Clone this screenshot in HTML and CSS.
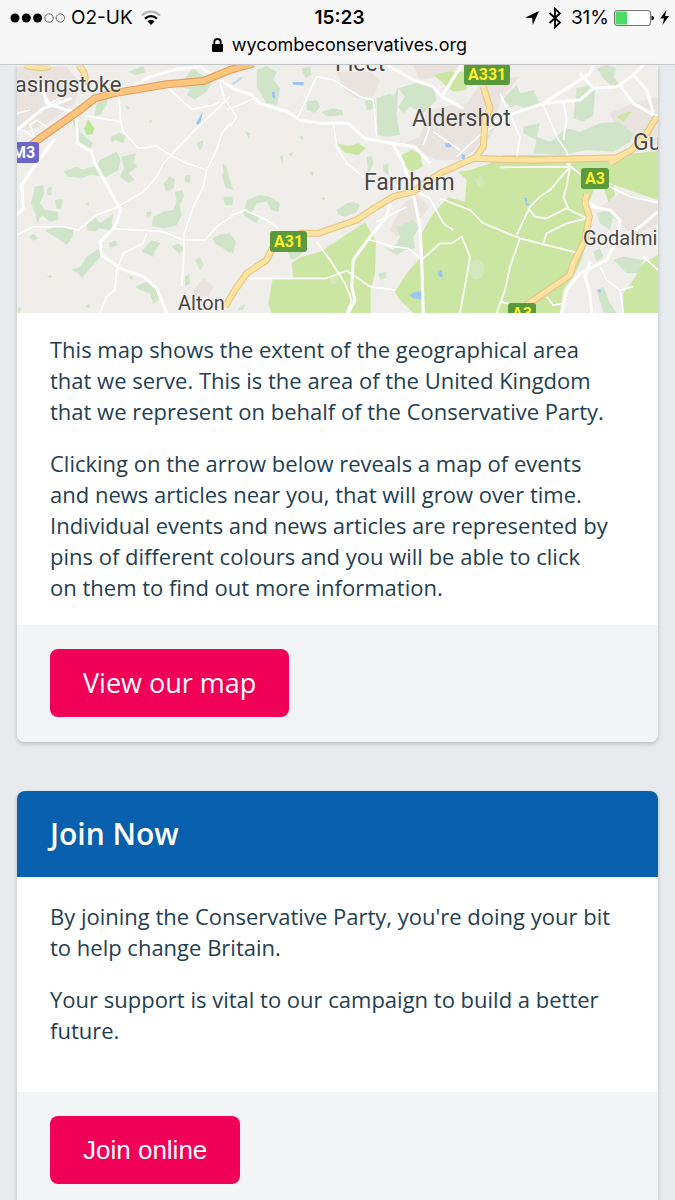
FILE: index.html
```html
<!DOCTYPE html>
<html lang="en">

<head>
    <meta charset="UTF-8">
    <meta name="viewport" content="width=device-width, initial-scale=1">
    <title>Wycombe Conservatives</title>
    <link rel="stylesheet" href="styles.css">
</head>

<body>
    <header class="browser-bar">
        <div class="status">
            <div class="status-left">
                <svg class="signal" width="56" height="12" viewBox="0 0 56 12" aria-hidden="true">
                    <circle cx="5" cy="6" r="4.5"/>
                    <circle cx="16.300" cy="6" r="4.5"/>
                    <circle cx="27.600" cy="6" r="4.5"/>
                    <circle class="empty" cx="39" cy="6" r="4.200"/>
                    <circle class="empty" cx="50.300" cy="6" r="4.200"/>
                </svg>
                <span>O2-UK</span>
                <svg width="20" height="16" viewBox="0 0 20 16" fill="none" stroke="#000" stroke-width="2.200" aria-hidden="true">
                    <path stroke="#b4b4b4" d="M1 5.500C6 .3 14 .3 19 5.500"/>
                    <path d="M4 8.700C7.500 5.300 12.500 5.300 16 8.700"/>
                    <path fill="#000" stroke="none" d="M6.300 11.300C8.500 9.500 11.500 9.500 13.700 11.300L10 15Z"/>
                </svg>
            </div>
            <span class="time">15:23</span>
            <div class="status-right">
                <svg width="14" height="14" viewBox="0 0 14 14" aria-hidden="true">
                    <path d="M0 6.800L14 0L7.800 14L7.200 7Z"/>
                </svg>
                <svg class="bluetooth" width="14" height="22" viewBox="0 0 14 22" fill="none" stroke="#000" stroke-width="1.800" aria-hidden="true">
                    <path d="M1.500 6L12 15.500L7 20.300V1.700L12 6.500L1.500 16"/>
                </svg>
                <span>31%</span>
                <svg width="40" height="16" viewBox="0 0 40 16" aria-hidden="true">
                    <rect x=".5" y=".5" width="36" height="15" rx="2.500" fill="#fff" stroke="#777"/>
                    <path fill="#4cd964" d="M2.500 1.500H13V14.500H2.500Q1.500 14.500 1.500 13.500V2.500Q1.500 1.500 2.500 1.500Z"/>
                    <path d="M37.500 5.500Q40 6 40 8T37.500 10.500Z"/>
                </svg>
                <svg class="bolt" width="9" height="15" viewBox="0 0 9 15" aria-hidden="true">
                    <path d="M6.500 0L0 8.500H4L2.500 15L9 6H5Z"/>
                </svg>
            </div>
        </div>
        <div class="address">
            <svg width="11" height="14" viewBox="0 0 11 14" aria-hidden="true">
                <path fill="none" stroke="#000" stroke-width="1.800" d="M2.300 7V4Q2.300 1 5.500 1T8.700 4V7"/>
                <rect y="6" width="11" height="8" rx="1"/>
            </svg>
            <span>wycombeconservatives.org</span>
        </div>
    </header>

    <main class="content">
        <section class="card">
            <div class="map">
                <svg class="map-art" viewBox="51 15 1923 744" preserveAspectRatio="xMidYMid slice" aria-hidden="true">
                    <rect x="51" y="15" width="1923" height="744" fill="#f0eeea"/>

                    <!-- towns -->
                    <g fill="#e8e3df">
                        <path d="M51 20H200L240 70L225 130L140 190L80 215L51 200Z"/>
                        <path d="M580 690L610 655L640 680L625 710H585Z"/>
                        <path d="M1010 35H1110L1140 60L1120 110L1070 115L1030 85Z"/>
                        <path d="M1170 510L1210 430L1250 405L1290 440L1240 500L1190 530Z"/>
                        <path d="M1215 250L1260 230L1280 150L1400 130L1450 60L1560 50L1500 120L1480 220L1440 260L1380 300L1310 300Z"/>
                        <path d="M1830 160L1900 130L1974 110V260L1900 240L1850 210Z"/>
                        <path d="M1800 440L1860 400L1974 425V490L1900 530L1850 480Z"/>
                        <path d="M1240 15H1400L1340 45L1260 60Z"/>
                    </g>

                    <!-- woodland -->
                    <g fill="#d0e4c9">
                        <path d="M385 35L430 18L435 38L405 45Z"/>
                        <path d="M550 60L580 25L605 45L640 60L620 95L585 118L560 105L570 90L545 80Z"/>
                        <path d="M290 130L325 105L320 135L300 165L283 168Z"/>
                        <path d="M215 175L235 185L240 215L280 250L270 265L235 245Z"/>
                        <path d="M190 335L230 320L245 328L290 318L300 300L350 275L362 300L355 330L320 350L270 345L245 355L205 350Z"/>
                        <path d="M365 290L408 280L400 305L412 320L385 340L405 360L385 370L360 350L372 325Z"/>
                        <path d="M330 230L360 218L378 230L370 250L345 240L335 250Z"/>
                        <path d="M105 380L130 375L132 400L120 430L135 450L175 455V480L150 485L125 465L112 490L105 460L93 430Z"/>
                        <path d="M142 385L155 380V405L142 405ZM165 420L188 418L185 445L170 448Z"/>
                        <path d="M135 512L170 498L220 505L218 530L200 555L165 530Z"/>
                        <path d="M262 485L285 470L300 490L340 462L335 490L340 512L295 505L285 515L260 510Z"/>
                        <path d="M490 370L510 348L525 360L520 385L500 395ZM555 348L572 345L570 368L555 365Z"/>
                        <path d="M525 395L548 390L552 410L540 435L545 465L530 495L495 505L455 498L460 470L490 455L520 450L530 425Z"/>
                        <path d="M440 455L455 455L450 470L438 468Z"/>
                        <path d="M425 575L455 540L482 550L465 570L460 590Z"/>
                        <path d="M515 560L535 550L550 565L540 583ZM585 600L600 592L612 615L600 630ZM555 650L568 643L570 672L555 678Z"/>
                        <path d="M215 630L240 620L260 590L290 570L310 565L300 590L285 610L265 630L245 655L235 640Z"/>
                        <path d="M325 550L345 542L355 555L330 563ZM385 645L400 650L395 660Z"/>
                        <path d="M405 680L440 665L460 670L475 690L485 715L460 732L450 700L420 690Z"/>
                        <path d="M590 250L610 240L608 262L598 272ZM85 530L100 522L115 535L100 542Z"/>
                        <path d="M638 535L665 522L690 525V580L670 565L645 550Z"/>
                        <path d="M668 310L680 320L688 355L700 390L680 385L670 345ZM672 412H698V435H675Z"/>
                        <path d="M770 30L800 18L830 35L820 60L840 85L835 115L830 135L800 130L785 105L770 80Z"/>
                        <path d="M905 25L930 20L935 45L915 55ZM920 125L950 120L960 140L945 158L920 150Z"/>
                        <path d="M965 155L1000 145L1025 150L1030 165L980 170ZM1095 120L1125 120L1128 145L1100 152Z"/>
                        <path d="M1130 115L1170 100L1180 110L1195 80L1190 165L1200 225L1160 230L1133 225Z"/>
                        <path d="M1195 85L1260 65L1300 80L1310 120L1270 160L1230 140L1210 160L1195 140L1215 110Z"/>
                        <path d="M740 420L780 405L810 410L840 430L835 455L815 450L800 425L770 430L755 460L778 475L770 490L730 465Z"/>
                        <path d="M660 525L690 520L708 545L700 580L660 560ZM860 570L880 560L915 570L895 590L875 600Z"/>
                        <path d="M1010 450L1040 430L1060 425L1080 435L1070 455L1035 470L1015 465Z"/>
                        <path d="M1100 290L1115 288L1120 310L1105 345ZM1150 315L1165 310V345L1150 335Z"/>
                        <path d="M665 340L685 355L695 390L675 380ZM670 410H695V435H675Z"/>
                        <path d="M1150 560L1180 570L1200 530L1190 500L1240 480L1260 500L1240 530L1245 565L1215 570L1190 585Z"/>
                        <path d="M1135 640L1160 636L1158 655L1140 660Z"/>
                        <path d="M1510 115L1550 75L1560 100L1600 90L1620 130L1590 150L1550 135L1530 140Z"/>
                        <path d="M1730 85L1770 75L1785 90L1780 165L1750 185L1720 175Z"/>
                        <path d="M1570 200L1620 190L1610 230L1650 245L1700 205L1740 215L1800 190L1855 185L1900 220L1890 245L1840 275L1760 270L1690 285L1600 280L1610 240L1570 220Z"/>
                        <path d="M1790 460L1825 450L1840 470L1830 510L1800 490Z"/>
                        <path d="M1780 575L1800 565L1810 590L1790 605ZM1840 600L1870 590L1930 600L1920 640L1880 640Z"/>
                        <path d="M1790 25L1820 15L1850 25L1840 50L1860 75L1835 80L1810 55Z"/>
                        <path d="M1790 690L1810 680L1830 730L1850 759H1810Z"/>
                        <path d="M55 740L63 745L60 758H52ZM255 740L270 730V745ZM720 740L735 732L730 750L715 750Z"/>
                        <path d="M140 650L152 645L155 655ZM255 430L268 428L265 440ZM377 137L390 142L382 150ZM445 183L460 178L452 190Z"/>
                        <path d="M735 213L750 220L745 235ZM840 290L850 283L848 315ZM895 230L910 228L908 240ZM865 282L880 275L875 290ZM928 338L940 335L938 348ZM965 415L975 412L972 423Z"/>
                    </g>

                    <!-- parks and the Surrey Hills -->
                    <g fill="#cbe6a3">
                        <path d="M252 205L265 178L283 205L278 222L260 225Z" fill="#bfe59a"/>
                        <path d="M1010 250L1045 258L1075 250L1098 265L1075 285L1035 278Z"/>
                        <path d="M1205 285L1235 270L1260 280L1268 320L1235 335L1215 320Z"/>
                        <path d="M1300 45L1340 35H1400V90L1360 95Z"/>
                        <path d="M1850 170L1880 155H1895L1870 185Z"/>
                        <path d="M814 759L805 730L818 658H880L875 610L900 592L960 575L1095 487L1128 545L1125 640L1112 690V759Z"/>
                        <path d="M1185 695L1220 640L1260 595L1265 520L1300 460L1345 412L1395 425L1400 360L1375 335L1410 330L1470 310L1510 285L1860 285L1974 272V420L1900 395L1830 370L1780 390L1765 440L1760 540L1745 600L1725 640L1690 690L1680 759H1240L1195 715Z"/>
                        <path d="M1870 759V700L1900 660L1930 610L1974 585V759Z"/>
                        <path d="M1810 380L1840 375L1845 405L1825 425Z"/>
                    </g>
                    <g fill="#d4e8bd">
                        <ellipse cx="1430" cy="628" rx="23" ry="30"/>
                        <path d="M990 650L1015 645L1012 670L995 675ZM1425 360L1445 345L1452 370L1435 380Z"/>
                    </g>

                    <!-- water -->
                    <g fill="#9cc4f5">
                        <path d="M588 190L596 175L608 155L602 185L595 195Z"/>
                        <path d="M877 66H912L910 76L880 74ZM815 96L824 95L826 117L818 113Z"/>
                        <path d="M695 70L728 48L722 60L700 75Z" opacity=".5"/>
                        <path d="M1335 250H1354V262H1338ZM1385 283L1396 285L1393 299L1385 296Z"/>
                        <path d="M1228 705L1245 695H1267L1265 718L1240 715ZM1312 640L1325 628L1328 652L1318 650Z"/>
                        <path d="M1572 412L1582 415L1580 428L1592 435L1580 438ZM1792 690L1803 688L1800 700Z"/>
                    </g>

                    <!-- minor roads -->
                    <g fill="none" stroke="#fff" stroke-width="5" stroke-linejoin="round">
                        <path d="M51 525L100 500L190 500L235 510L290 465L345 445L430 395L470 350L490 310L580 215L690 110"/>
                        <path d="M345 507L450 512L490 515L550 540H615L650 500L700 465L735 450L800 480L835 505"/>
                        <path d="M245 165L362 185L370 215L415 265L470 258L510 285L560 310L620 330L650 270L665 220L690 190"/>
                        <path d="M620 330L610 380L580 440L553 520L550 620L545 680"/>
                        <path d="M362 185L355 80M505 85L575 148L640 135L660 125M660 70L675 120L710 170L690 200"/>
                        <path d="M440 520L430 550L370 580L350 630L345 690L320 710L300 759"/>
                        <path d="M765 115L680 150M890 180L950 50L1000 60L1080 110L1120 120L1130 230"/>
                        <path d="M1000 190L1010 260L1040 310L1090 350"/>
                        <path d="M950 545L990 600L1035 670L1055 720L1040 759M735 655L980 655L1040 632L1110 680L1185 690"/>
                        <path d="M1110 540L1180 560L1225 565L1260 595M1265 600L1320 550H1355L1385 530L1410 590L1400 650L1380 759"/>
                        <path d="M1130 485L1220 440M1260 400L1290 415L1330 490L1360 510"/>
                        <path d="M1320 415L1410 450L1450 490L1560 535L1730 578"/>
                        <path d="M1560 535L1530 620L1515 690L1490 759M1550 525L1590 440L1620 410L1650 390L1710 320L1500 322"/>
                        <path d="M1585 445L1605 470L1640 475L1700 445L1760 475L1700 490L1640 520L1630 550M1710 320L1700 380L1690 410L1705 445"/>
                        <path d="M1700 310L1750 350L1830 380L1890 410L1974 428"/>
                        <path d="M1630 135L1670 230L1700 275L1710 315M1690 125L1700 180L1690 240M1500 100L1560 230L1550 290"/>
                        <path d="M1370 290L1440 225L1510 180M1300 215L1380 270M1270 255L1290 200"/>
                        <path d="M1640 710L1660 735L1690 730M1500 725L1540 735L1600 730"/>
                        <path d="M1800 620L1820 660L1860 690L1900 680M1860 690L1870 759M1930 590L1974 630"/>
                        <path d="M70 210L105 235L90 195L110 180L140 200M100 60L150 130L190 110M51 160L90 150"/>
                    </g>

                    <!-- main roads -->
                    <g fill="none" stroke="#fff" stroke-width="9" stroke-linejoin="round">
                        <path d="M51 210L130 145L215 115M125 70L140 130L215 155L230 180L233 250L275 275L285 310L362 450L345 500L300 545L305 585L360 625L430 650L470 685L500 759"/>
                        <path d="M165 235L95 330L65 375L70 445L51 465"/>
                        <path d="M390 85L450 50L530 28L600 20L660 60L700 85L755 105L780 130L860 155L900 180L960 190L1045 190L1095 235L1175 250L1245 260L1290 310"/>
                        <path d="M1180 255L1210 310L1240 400L1260 500L1265 600L1270 759"/>
                        <path d="M1175 410L1160 470L1110 530L1060 600L1055 680L1065 720L1045 759"/>
                        <path d="M1160 15L1240 60L1300 80L1325 110L1385 15M1390 145L1325 110"/>
                        <path d="M1450 200L1540 160L1630 130L1770 40L1780 15M1630 130L1740 120L1780 85L1850 80L1900 45L1930 15"/>
                        <path d="M1740 40L1780 85M1860 75L1900 130L1970 170M1900 45L1940 90L1960 160"/>
                        <path d="M1750 410L1780 440L1830 450L1860 480L1850 540L1820 600L1740 640L1700 690L1685 759M1974 455L1920 500L1850 540M1770 605L1755 650L1770 700L1775 759"/>
                    </g>

                    <!-- A roads -->
                    <g fill="none" stroke="#e6c386" stroke-width="21" stroke-linejoin="round">
                        <path d="M75 15Q120 30 150 17M235 15Q265 45 250 70M675 740L705 690L740 640L800 600L820 560L900 520L955 520L1070 480L1130 440L1180 410L1240 395L1320 340L1420 295L1500 298L1600 300L1700 298L1850 293L1895 270L1940 220L1970 170"/>
                        <path d="M1450 80L1470 145L1455 180L1450 260L1425 295M1830 310L1870 285M1760 400L1755 430L1768 470L1755 540L1720 610L1710 645L1580 735"/>
                    </g>
                    <g fill="none" stroke="#fde39f" stroke-width="15" stroke-linejoin="round">
                        <path d="M75 15Q120 30 150 17M235 15Q265 45 250 70M675 740L705 690L740 640L800 600L820 560L900 520L955 520L1070 480L1130 440L1180 410L1240 395L1320 340L1420 295L1500 298L1600 300L1700 298L1850 293L1895 270L1940 220L1970 170"/>
                        <path d="M1450 80L1470 145L1455 180L1450 260L1425 295M1830 310L1870 285M1760 400L1755 430L1768 470L1755 540L1720 610L1710 645L1580 735"/>
                    </g>

                    <!-- M3 -->
                    <path fill="none" stroke="#e3a064" stroke-width="24" d="M51 290L110 242L240 150L285 115L340 100L500 73L610 63L690 30L760 10"/>
                    <path fill="none" stroke="#ffc57c" stroke-width="17" d="M51 290L110 242L240 150L285 115L340 100L500 73L610 63L690 30L760 10"/>
                </svg>

                <span class="place basingstoke">Basingstoke</span>
                <span class="place fleet">Fleet</span>
                <span class="place aldershot">Aldershot</span>
                <span class="place farnham">Farnham</span>
                <span class="place guildford">Guildford</span>
                <span class="place small godalming">Godalming</span>
                <span class="place small alton">Alton</span>

                <span class="road motorway m3">M3</span>
                <span class="road a331">A331</span>
                <span class="road a31">A31</span>
                <span class="road a3">A3</span>
                <span class="road a3-south">A3</span>
            </div>
            <div class="card-body">
                <p>This map shows the extent of the geographical area<br>
                that we serve. This is the area of the United Kingdom<br>
                that we represent on behalf of the Conservative Party.</p>
                <p>Clicking on the arrow below reveals a map of events<br>
                and news articles near you, that will grow over time.<br>
                Individual events and news articles are represented by<br>
                pins of different colours and you will be able to click<br>
                on them to find out more information.</p>
            </div>
            <div class="card-footer">
                <a class="btn" href="#map">View our map</a>
            </div>
        </section>

        <section class="card">
            <h2 class="card-title">Join Now</h2>
            <div class="card-body join-text">
                <p>By joining the Conservative Party, you're doing your bit<br>
                to help change Britain.</p>
                <p>Your support is vital to our campaign to build a better<br>
                future.</p>
            </div>
            <div class="card-footer">
                <button class="btn btn-join" type="button">Join online</button>
            </div>
        </section>
    </main>
</body>

</html>
```

FILE: styles.css
```css
* {
    box-sizing: border-box;
}

body {
    display: flex;
    flex-direction: column;
    height: 100vh;
    margin: 0;
    overflow: hidden;
    background-color: #e7ebee;
    color: #1f4050;
    font-family: "Open Sans", sans-serif;
    font-size: 22px;
    line-height: 31px;
}

svg {
    display: block;
    flex-shrink: 0;
}

/* browser bar */
.browser-bar {
    flex-shrink: 0;
    padding: 4px 6px 6px 10px;
    background-color: #f7f7f7;
    border-bottom: 1px solid #c6c8ca;
    color: #000;
    font-family: Inter, sans-serif;
    font-size: 19px;
    line-height: 27px;
}

.status {
    display: grid;
    grid-template-columns: 1fr auto 1fr;
    align-items: center;
}

.status-left,
.status-right,
.address {
    display: flex;
    align-items: center;
}

.status-left {
    gap: 5px;
}

.status-left span {
    margin-right: 3px;
}

.status-right {
    justify-content: flex-end;
    gap: 5px;
}

.bluetooth {
    margin: 0 4px;
}

.bolt {
    margin-left: 1px;
}

.signal .empty {
    fill: none;
    stroke: #666;
    stroke-width: 1;
}

.time {
    font-weight: 600;
}

.address {
    justify-content: center;
    gap: 9px;
    font-size: 18px;
}

/* cards */
.content {
    display: flex;
    flex-direction: column;
    gap: 49px;
    padding: 0 17px 49px;
}

.card {
    overflow: hidden;
    flex-shrink: 0;
    border-radius: 8px;
    background-color: #fff;
    box-shadow: 0 2px 4px rgba(0, 0, 0, 0.2);
}

.card:first-child {
    border-radius: 0 0 8px 8px;
}

.card-title {
    margin: 0;
    padding: 23px 33px;
    background-color: #0760ad;
    color: #fff;
    font-size: 30px;
    font-weight: 600;
    line-height: 40px;
}

.card-body {
    padding: 21px 33px 22px;
}

.card-body p {
    margin: 0 0 21px;
}

.card-body p:last-child {
    margin-bottom: 0;
}

.join-text {
    padding: 24px 33px 46px;
}

.card-footer {
    padding: 24px 33px 25px;
    background-color: #f2f4f6;
}

.btn {
    display: inline-block;
    padding: 16px 33px;
    border: none;
    border-radius: 8px;
    background-color: #f00056;
    color: #fff;
    font-family: "Open Sans", sans-serif;
    font-size: 27px;
    line-height: 36px;
    text-decoration: none;
    vertical-align: top;
    cursor: pointer;
}

.btn-join {
    font-family: "Liberation Sans", Arial, sans-serif;
    font-size: 26px;
}

/* map */
.map {
    position: relative;
    overflow: hidden;
    height: 248px;
}

.map-art {
    width: 100%;
    height: 100%;
}

.place,
.road {
    position: absolute;
    font-family: Roboto, sans-serif;
    white-space: nowrap;
}

.place {
    color: #4a4644;
    font-size: 23px;
    line-height: 28px;
    text-shadow: 0 0 2px #fff, 0 0 2px #fff;
}

.place.small {
    font-size: 20px;
}

.road {
    padding: 0 4px;
    border-radius: 3px;
    background-color: #5b9a3b;
    color: #fdf02c;
    font-size: 16px;
    font-weight: 700;
    line-height: 21px;
}

.motorway {
    background-color: #6a66cc;
    color: #fff;
}

.basingstoke { top: 6px; left: -16px; font-size: 22px; }
.fleet { top: -15px; left: 318px; }
.aldershot { top: 40px; left: 395px; }
.farnham { top: 104px; left: 347px; }
.guildford { top: 64px; left: 616px; }
.godalming { top: 159px; left: 566px; }
.alton { top: 224px; left: 161px; }

.m3 { top: 77px; left: -9px; }
.a331 { top: -1px; left: 447px; }
.a31 { top: 166px; left: 253px; }
.a3 { top: 103px; left: 564px; }
.a3-south { top: 238px; left: 491px; }
```
